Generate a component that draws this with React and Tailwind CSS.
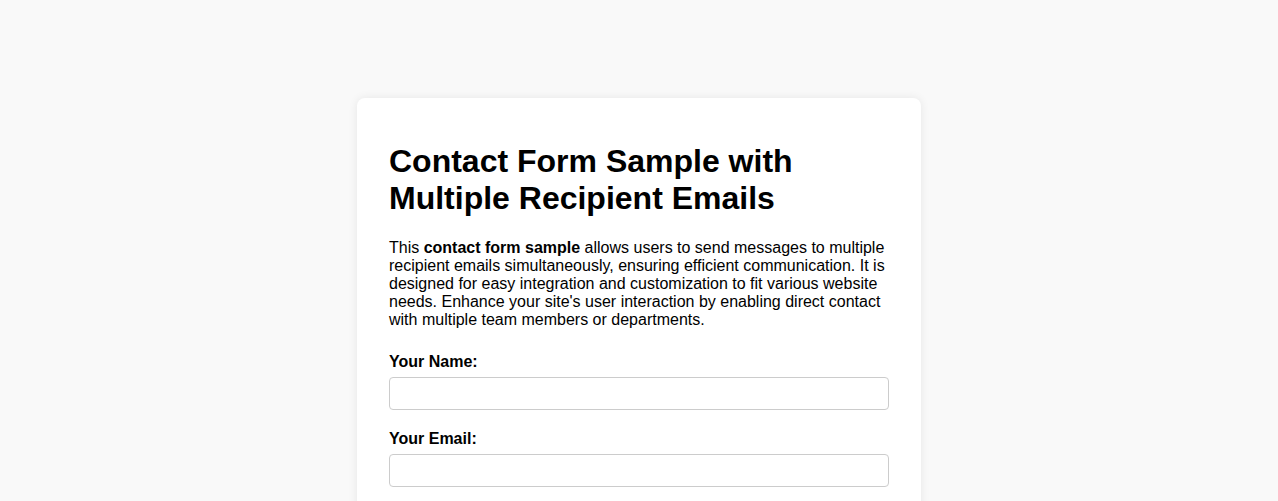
import React from 'react'

const App = () => {
  return (
    <div className="min-h-screen bg-[#f9f9f9] pt-[98px] font-['Liberation_Sans',Arial,sans-serif] text-black">
      <div className="mx-auto w-[564px] rounded-lg bg-white px-8 pb-8 pt-[45px] shadow-[0_0_10px_rgba(0,0,0,0.08)]">
        <h1 className="text-[32px] font-bold leading-[36.8px]">Contact Form Sample with Multiple Recipient Emails</h1>
        <p className="mt-[22px] text-base leading-[18px]">
          This <strong>contact form sample</strong> allows users to send messages to multiple recipient emails simultaneously, ensuring efficient communication. It is designed for easy integration and customization to fit various website needs. Enhance your site's user interaction by enabling direct contact with multiple team members or departments.
        </p>
        <form className="mt-[24px]">
          <div className="mb-[20px]">
            <label className="mb-[6px] block text-base font-bold leading-[18px]">Your Name:</label>
            <input type="text" className="block h-[33px] w-full rounded border border-[#ccc] px-2" />
          </div>
          <div className="mb-[20px]">
            <label className="mb-[6px] block text-base font-bold leading-[18px]">Your Email:</label>
            <input type="email" className="block h-[33px] w-full rounded border border-[#ccc] px-2" />
          </div>
        </form>
      </div>
    </div>
  )
}

export default App
